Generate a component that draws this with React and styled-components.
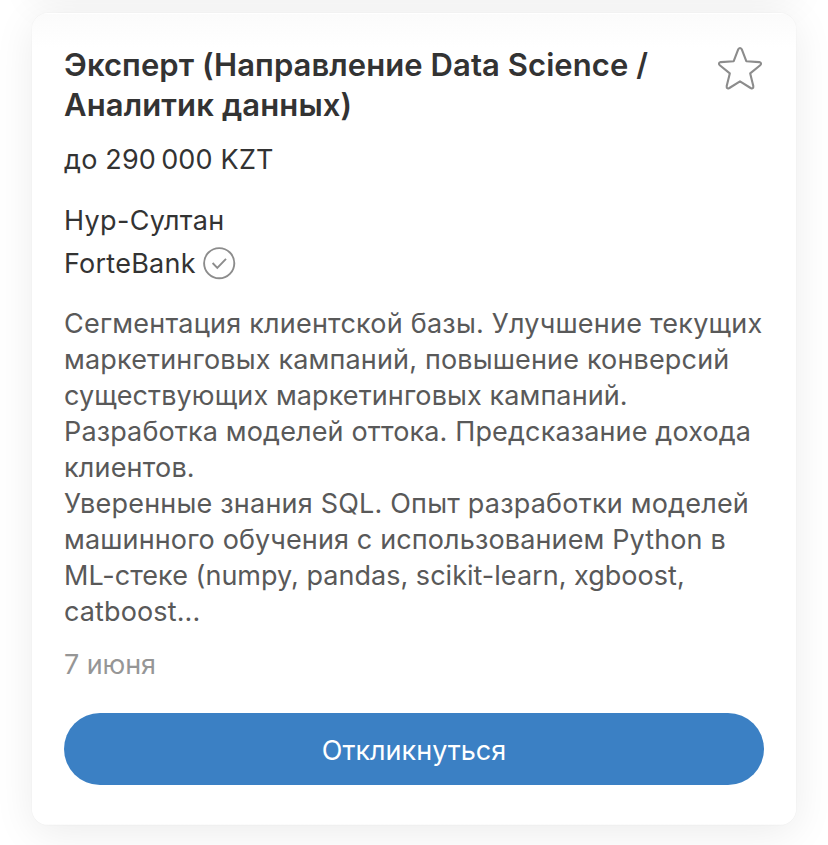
import React from 'react';
import styled, { createGlobalStyle } from 'styled-components';

const GlobalStyle = createGlobalStyle`
  * {
    box-sizing: border-box;
  }

  body {
    margin: 0;
    background: #fff;
    font-family: Inter, 'Liberation Sans', sans-serif;
    overflow: hidden;
  }
`;

const Page = styled.main`
  height: 845px;
  padding: 0 32px;
  overflow: hidden;
`;

// bottom edge of the card above, only its shadow reaches the page
const PreviousCard = styled.div`
  height: 100px;
  margin-top: -103px;
  border-radius: 16px;
  box-shadow: 0 8px 40px rgba(0, 0, 0, 0.05);
`;

const Card = styled.article`
  height: 812px;
  margin-top: 16px;
  padding: 31px 31px 0;
  background: linear-gradient(#fbfbfb, #fff 34px);
  border: 1px solid transparent;
  border-radius: 16px;
  box-shadow: 0 8px 40px rgba(0, 0, 0, 0.08), 0 0 1px rgba(0, 0, 0, 0.12);
`;

const Header = styled.header`
  display: flex;
  justify-content: space-between;
`;

const Title = styled.h2`
  margin: 0;
  font-size: 31px;
  font-weight: 600;
  line-height: 40px;
  color: #333;
`;

const Line = styled.span`
  display: block;
  width: max-content;
  letter-spacing: ${({ $spacing }) => $spacing || 0}px;
  white-space: pre;
`;

const FavoriteButton = styled.button`
  width: 48px;
  height: 48px;
  margin-top: 1px;
  padding: 0;
  border: 0;
  background: none;
`;

const Salary = styled.div`
  margin-top: 17px;
  font-size: 27px;
  line-height: 36px;
  color: #333;
`;

const Location = styled.div`
  margin-top: 25px;
  font-size: 27px;
  line-height: 36px;
  color: #333;
`;

const Company = styled.div`
  display: flex;
  align-items: center;
  gap: 6px;
  height: 36px;
  margin-top: 7px;
  font-size: 27px;
  line-height: 36px;
  color: #333;
`;

const Description = styled.div`
  margin-top: 24px;
  font-size: 27px;
  line-height: 36px;
  color: #595959;
`;

const PostedAt = styled.div`
  margin-top: 17px;
  font-size: 27px;
  line-height: 36px;
  color: #969696;
`;

const RespondButton = styled.button`
  display: flex;
  justify-content: center;
  align-items: center;
  width: 700px;
  height: 72px;
  margin-top: 30px;
  padding: 2px 0 0;
  border: 0;
  border-radius: 36px;
  background: #3b80c4;
  color: #fff;
  font: 400 27px Inter, sans-serif;
`;

const StarIcon = () => (
  <svg width="48" height="48" viewBox="0 0 48 48" fill="none" stroke="#8c8c8c" strokeWidth="2.1" strokeLinejoin="round">
    <path d="M22.2 3.3Q24 .7 25.8 3.3L30.3 15.2L43.2 16.1Q46.3 17 44.2 19.2L34.2 27.4L37.3 40Q37.6 43.4 34.6 42L24 35.4L13.4 42Q10.4 43.4 10.7 40L13.8 27.4L3.8 19.2Q1.7 17 4.8 16.1L17.7 15.2Z" />
  </svg>
);

const VerifiedIcon = () => (
  <svg width="34" height="34" viewBox="0 0 34 34" fill="none" stroke="#8c8c8c" strokeWidth="1.9">
    <circle cx="17.2" cy="16.2" r="15.1" />
    <path d="M10.6 16L15.3 20.9L24 11.8" />
  </svg>
);

const description = [
  { text: 'Сегментация клиентской базы. Улучшение текущих', spacing: 0.22 },
  { text: 'маркетинговых кампаний, повышение конверсий', spacing: 0.16 },
  { text: 'существующих маркетинговых кампаний.', spacing: 0.1 },
  { text: 'Разработка моделей оттока. Предсказание дохода', spacing: 0.14 },
  { text: 'клиентов.', spacing: 0.18 },
  { text: 'Уверенные знания SQL. Опыт разработки моделей', spacing: 0.2 },
  { text: 'машинного обучения с использованием Python в', spacing: 0.13 },
  { text: 'ML-стеке (numpy, pandas, scikit-learn, xgboost,', spacing: 0.02 },
  { text: 'catboost...', spacing: 0.12 },
];

const App = () => (
  <>
    <GlobalStyle />
    <Page>
      <PreviousCard />
      <Card>
        <Header>
          <Title>
            <Line $spacing={0.07}>Эксперт (Направление Data Science /</Line>
            <Line $spacing={0.12}>Аналитик данных)</Line>
          </Title>
          <FavoriteButton>
            <StarIcon />
          </FavoriteButton>
        </Header>
        <Salary>
          <Line $spacing={0.18}>до 290{'\u2009'}000 KZT</Line>
        </Salary>
        <Location>
          <Line $spacing={0.33}>Нур-Султан</Line>
        </Location>
        <Company>
          <Line $spacing={0.24}>ForteBank</Line>
          <VerifiedIcon />
        </Company>
        <Description>
          {description.map(({ text, spacing }) => (
            <Line key={text} $spacing={spacing}>{text}</Line>
          ))}
        </Description>
        <PostedAt>
          <Line $spacing={-0.1}>7 июня</Line>
        </PostedAt>
        <RespondButton>
          <Line>Откликнуться</Line>
        </RespondButton>
      </Card>
    </Page>
  </>
);

export default App;
